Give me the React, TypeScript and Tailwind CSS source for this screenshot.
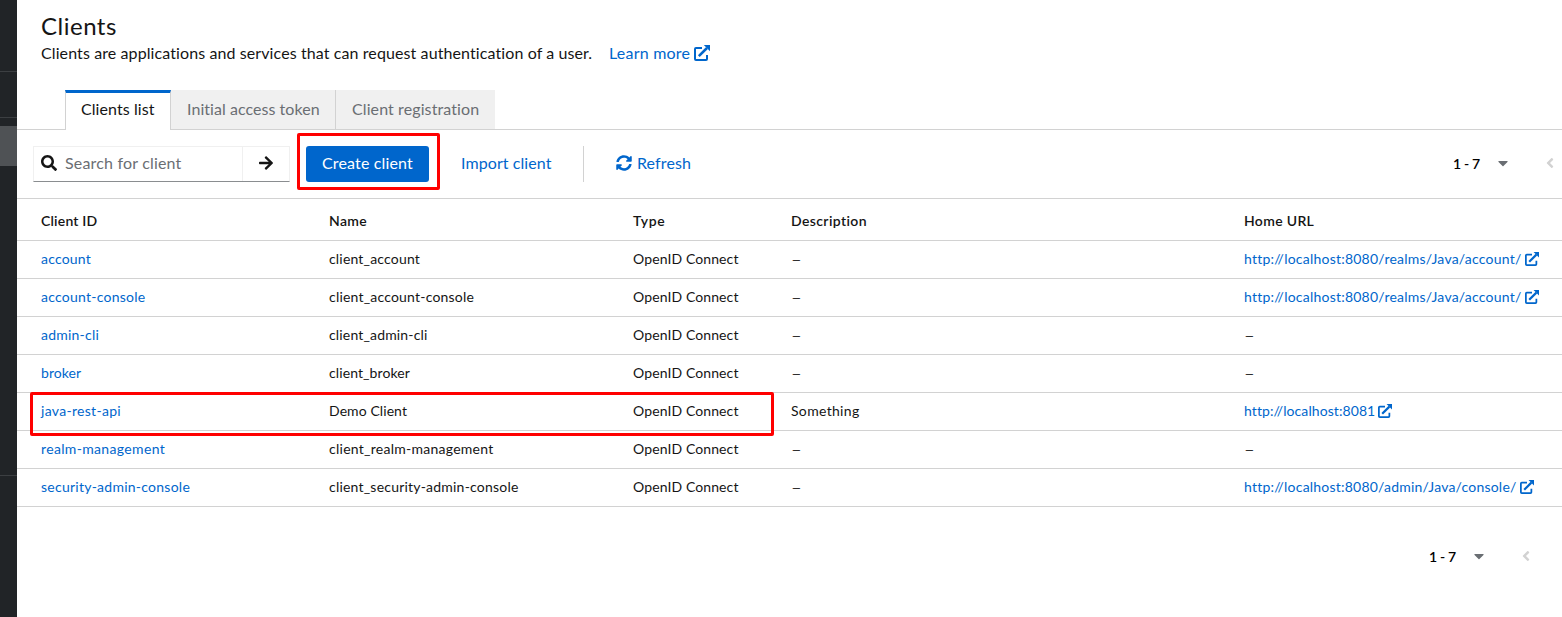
import type { ReactNode } from 'react';
import { FaAngleLeft, FaArrowRight, FaCaretDown, FaSearch, FaSyncAlt } from 'react-icons/fa';

type Client = {
  id: string;
  idTracking: string;
  name: string;
  nameTracking: string;
  description?: string;
  url?: string;
  urlTracking?: string;
};

const clients: Client[] = [
  { id: 'account', idTracking: 'tracking-[0.21px]', name: 'client_account', nameTracking: 'tracking-[0.18px]', url: 'http://localhost:8080/realms/Java/account/', urlTracking: 'tracking-[0.22px]' },
  { id: 'account-console', idTracking: 'tracking-[0.25px]', name: 'client_account-console', nameTracking: 'tracking-[0.2px]', url: 'http://localhost:8080/realms/Java/account/', urlTracking: 'tracking-[0.22px]' },
  { id: 'admin-cli', idTracking: 'tracking-[0.22px]', name: 'client_admin-cli', nameTracking: 'tracking-[0.16px]' },
  { id: 'broker', idTracking: 'tracking-[0.04px]', name: 'client_broker', nameTracking: 'tracking-[0.1px]' },
  { id: 'java-rest-api', idTracking: 'tracking-[0.3px]', name: 'Demo Client', nameTracking: 'tracking-[0.08px]', description: 'Something', url: 'http://localhost:8081', urlTracking: 'tracking-[0.08px]' },
  { id: 'realm-management', idTracking: 'tracking-[0.34px]', name: 'client_realm-management', nameTracking: 'tracking-[0.26px]' },
  { id: 'security-admin-console', idTracking: 'tracking-[0.25px]', name: 'client_security-admin-console', nameTracking: 'tracking-[0.21px]', url: 'http://localhost:8080/admin/Java/console/', urlTracking: 'tracking-[0.21px]' },
];

function ExternalLinkIcon({ className }: { className: string }) {
  return (
    <svg viewBox="0 0 16 16" className={className} fill="none" stroke="currentColor">
      <path d="M8 3H2a1 1 0 0 0-1 1v10a1 1 0 0 0 1 1h10a1 1 0 0 0 1-1v-4" strokeWidth="2" />
      <path d="M4.8 11.2 13 3" strokeWidth="2.5" />
      <path d="M9.8 0H16v6.2z" fill="currentColor" stroke="none" />
    </svg>
  );
}

function Pagination() {
  return (
    <div className="flex items-center">
      <span className="w-[26px] whitespace-nowrap text-sm font-semibold text-black tracking-[-0.3px]">1 - 7</span>
      <FaCaretDown className="mb-0.5 ml-4 size-4 text-[#6a6e73]" />
      <FaAngleLeft className="mb-0.5 ml-[31px] size-4 text-[#d2d2d2]" />
    </div>
  );
}

function Cell({ children, className = '' }: { children: ReactNode; className?: string }) {
  return <div className={`flex items-center whitespace-nowrap ${className}`}>{children}</div>;
}

function Dash() {
  return <span className="pt-0.5 pl-px text-[11px] text-black">—</span>;
}

const columns = 'grid grid-cols-[288px_304px_158px_453px_318px] border-b border-[#d2d2d2] pl-6';

export default function App() {
  return (
    <div className="flex h-[617px] w-[1562px] overflow-hidden bg-white font-['Lato',sans-serif] text-base text-[#151515]">
      <aside className="flex w-[17px] shrink-0 flex-col bg-[#212427]">
        <div className="h-[72px] border-b border-[#3c3f42]" />
        <div className="h-[46px] border-b border-[#3c3f42]" />
        <div className="mt-2 h-10 bg-[#4f5255]" />
        <div className="h-[310px] border-b border-[#3c3f42]" />
      </aside>

      <main className="relative flex w-[1545px] shrink-0 flex-col">
        <header className="h-[90px] pl-6 pt-2.5">
          <h1 className="text-2xl leading-[31px] tracking-[0.5px]">Clients</h1>
          <div className="flex h-6 items-center whitespace-nowrap">
            <p className="w-[568px] tracking-[0.1px]">
              Clients are applications and services that can request authentication of a user.
            </p>
            <a className="flex items-center text-[#06c]">
              <span className="w-[85px] tracking-[0.21px]">Learn more</span>
              <ExternalLinkIcon className="size-4" />
            </a>
          </div>
        </header>

        <nav className="flex h-10 whitespace-nowrap">
          <div className="w-12 border-b border-[#d2d2d2]" />
          <div className="w-[106px] border-x border-t-3 border-x-[#d2d2d2] border-t-[#06c] pl-[15px] pt-1 tracking-[0.07px]">Clients list</div>
          <div className="w-[165px] border-b border-r border-[#d2d2d2] bg-[#f0f0f0] pl-4 pt-[7px] tracking-[0.05px] text-[#6a6e73]">Initial access token</div>
          <div className="w-[159px] border-b border-[#d2d2d2] bg-[#f0f0f0] pl-4 pt-[7px] tracking-[0.1px] text-[#6a6e73]">Client registration</div>
          <div className="grow border-b border-[#d2d2d2]" />
        </nav>

        <div className="flex h-[69px] items-start justify-between whitespace-nowrap border-b border-[#d2d2d2] pl-4 pt-4">
          <div className="flex h-9 items-center">
            <div className="flex h-9 w-[257px] border border-[#f0f0f0] border-b-[#8a8d90]">
              <div className="flex w-[209px] items-center border-r border-[#f0f0f0] pl-[7px]">
                <FaSearch className="mb-0.5 size-4" />
                <span className="ml-2 pb-0.5 tracking-[0.18px] text-[#6a6e73]">Search for client</span>
              </div>
              <div className="flex grow items-center justify-center">
                <FaArrowRight className="mb-0.5 size-4" />
              </div>
            </div>
            <button className="ml-4 h-9 w-[123px] rounded-[3px] bg-[#06c] pb-0.5 tracking-[0.16px] text-white">Create client</button>
            <a className="ml-8 w-[122px] pb-0.5 tracking-[0.08px] text-[#06c]">Import client</a>
            <div className="h-9 w-px bg-[#d2d2d2]" />
            <a className="ml-8 flex items-center text-[#06c]">
              <FaSyncAlt className="mb-0.5 size-4" />
              <span className="ml-[5px] pb-0.5 tracking-[0.1px]">Refresh</span>
            </a>
          </div>
          <div className="flex h-9 items-center pr-1">
            <Pagination />
          </div>
        </div>

        <div className="text-sm">
          <div className={`${columns} h-[42px] font-semibold`}>
            <Cell className="pt-0.5 tracking-[0.2px]">Client ID</Cell>
            <Cell className="pt-0.5 tracking-[0.35px]">Name</Cell>
            <Cell className="pt-0.5 tracking-[0.6px]">Type</Cell>
            <Cell className="pt-0.5 tracking-[0.38px]">Description</Cell>
            <Cell className="pt-0.5 tracking-[0.33px]">Home URL</Cell>
          </div>
          {clients.map((c) => (
            <div key={c.id} className={`${columns} h-[38px]`}>
              <Cell className={`pb-0.5 text-[#06c] ${c.idTracking}`}>{c.id}</Cell>
              <Cell className={`pb-0.5 ${c.nameTracking}`}>{c.name}</Cell>
              <Cell className="pb-0.5 tracking-[0.11px]">OpenID Connect</Cell>
              <Cell className="pb-0.5 tracking-[0.32px]">{c.description ?? <Dash />}</Cell>
              <Cell className="pb-0.5">
                {c.url ? (
                  <a className={`flex items-center text-[#06c] ${c.urlTracking}`}>
                    {c.url}
                    <ExternalLinkIcon className="ml-[3px] size-3.5" />
                  </a>
                ) : (
                  <Dash />
                )}
              </Cell>
            </div>
          ))}
        </div>

        <footer className="flex justify-end pr-7 pt-10">
          <Pagination />
        </footer>

        <div className="pointer-events-none absolute left-[280px] top-[133px] h-[57px] w-[143px] rounded-[2px] border-3 border-[#f00]" />
        <div className="pointer-events-none absolute left-[13px] top-[392px] h-11 w-[744px] rounded-[2px] border-3 border-[#f00]" />
      </main>
    </div>
  );
}
